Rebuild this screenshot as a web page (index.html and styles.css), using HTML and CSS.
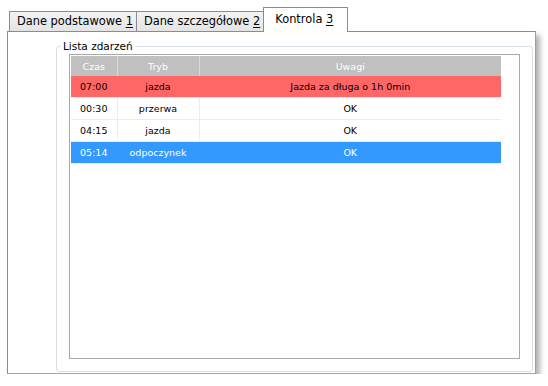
FILE: index.html
```html
<!DOCTYPE html>
<html lang="pl">
  <head>
    <meta charset="UTF-8" />
    <title>Kontrola</title>
    <link rel="stylesheet" href="styles.css">
  </head>
  <body>
    <div class="window">
      <div class="tabs">
        <div class="tab">Dane podstawowe <u>1</u></div>
        <div class="tab">Dane szczegółowe <u>2</u></div>
        <div class="tab active">Kontrola <u>3</u></div>
      </div>

      <div class="panel">
        <fieldset class="group">
          <legend>Lista zdarzeń</legend>
          <div class="list">
            <table>
              <colgroup>
                <col class="c-time" />
                <col class="c-mode" />
                <col class="c-note" />
              </colgroup>
              <thead>
                <tr>
                  <th>Czas</th>
                  <th>Tryb</th>
                  <th>Uwagi</th>
                </tr>
              </thead>
              <tbody>
                <tr class="warn">
                  <td>07:00</td>
                  <td>jazda</td>
                  <td>Jazda za długa o 1h 0min</td>
                </tr>
                <tr>
                  <td>00:30</td>
                  <td>przerwa</td>
                  <td>OK</td>
                </tr>
                <tr>
                  <td>04:15</td>
                  <td>jazda</td>
                  <td>OK</td>
                </tr>
                <tr class="selected">
                  <td>05:14</td>
                  <td>odpoczynek</td>
                  <td>OK</td>
                </tr>
              </tbody>
            </table>
          </div>
        </fieldset>
      </div>
    </div>
  </body>
</html>
```

FILE: styles.css
```css
body {
  margin: 0;
  background: #ffffff;
  font-family: "DejaVu Sans", Verdana, sans-serif;
  color: #000;
}
.window {
  padding: 7px 0 0 7px;
  width: 529px;
}

/* tabs */
.tabs {
  display: flex;
  align-items: flex-end;
  padding-left: 2px;
  position: relative;
  z-index: 1;
}
.tab {
  height: 19px;
  line-height: 19px;
  padding: 0 3px 0 7px;
  font-size: 11.4px;
  border: 1px solid #898c95;
  border-bottom: none;
  border-right: none;
  background: linear-gradient(#f3f3f3, #e4e4e4);
  white-space: nowrap;
}
.tab + .tab {
  border-left: 1px solid #898c95;
}
.tab.active {
  height: 24px;
  line-height: 22px;
  padding: 0 14px 0 11px;
  margin-bottom: -1px;
  background: #ffffff;
  border-right: 1px solid #898c95;
}
.tab u {
  text-decoration-thickness: 1px;
  text-underline-offset: 2px;
}

/* page */
.panel {
  box-sizing: border-box;
  height: 343px;
  padding-top: 8px;
  border: 1px solid #898c95;
  border-right-color: #9d9fa5;
  border-bottom-color: #a3a5aa;
  background: #ffffff;
  box-shadow: 4px 4px 5px rgba(0, 0, 0, 0.3);
}
.group {
  margin: 0 0 0 48px;
  padding: 1px 12px 12px 12px;
  border: 1px solid #d5dfe5;
  border-radius: 3px;
  width: 451px;
}
.group legend {
  padding: 0 2px;
  margin-left: -8px;
  font-size: 10.5px;
  line-height: 13px;
}

/* event list */
.list {
  height: 301px;
  padding: 1px;
  border: 1px solid #a9a9a9;
}
table {
  width: 430px;
  border-collapse: collapse;
  table-layout: fixed;
  font-size: 9.5px;
}
.c-time {
  width: 46px;
}
.c-mode {
  width: 82px;
}
.c-note {
  width: 302px;
}
th {
  height: 20px;
  padding: 0;
  background: #c0c0c0;
  color: #ffffff;
  font-weight: normal;
  border-left: 1px solid #d8d8d8;
}
th:first-child {
  border-left: none;
}
td {
  height: 21px;
  padding: 0;
  text-align: center;
  border-bottom: 1px solid #ececec;
  border-left: 1px solid #ececec;
}
td:first-child {
  border-left: none;
}
tr.warn td {
  background: #ff6666;
  border-left-color: #ff6666;
}
tr.selected td {
  background: #3399ff;
  color: #ffffff;
  border-left-color: #3399ff;
}
```
